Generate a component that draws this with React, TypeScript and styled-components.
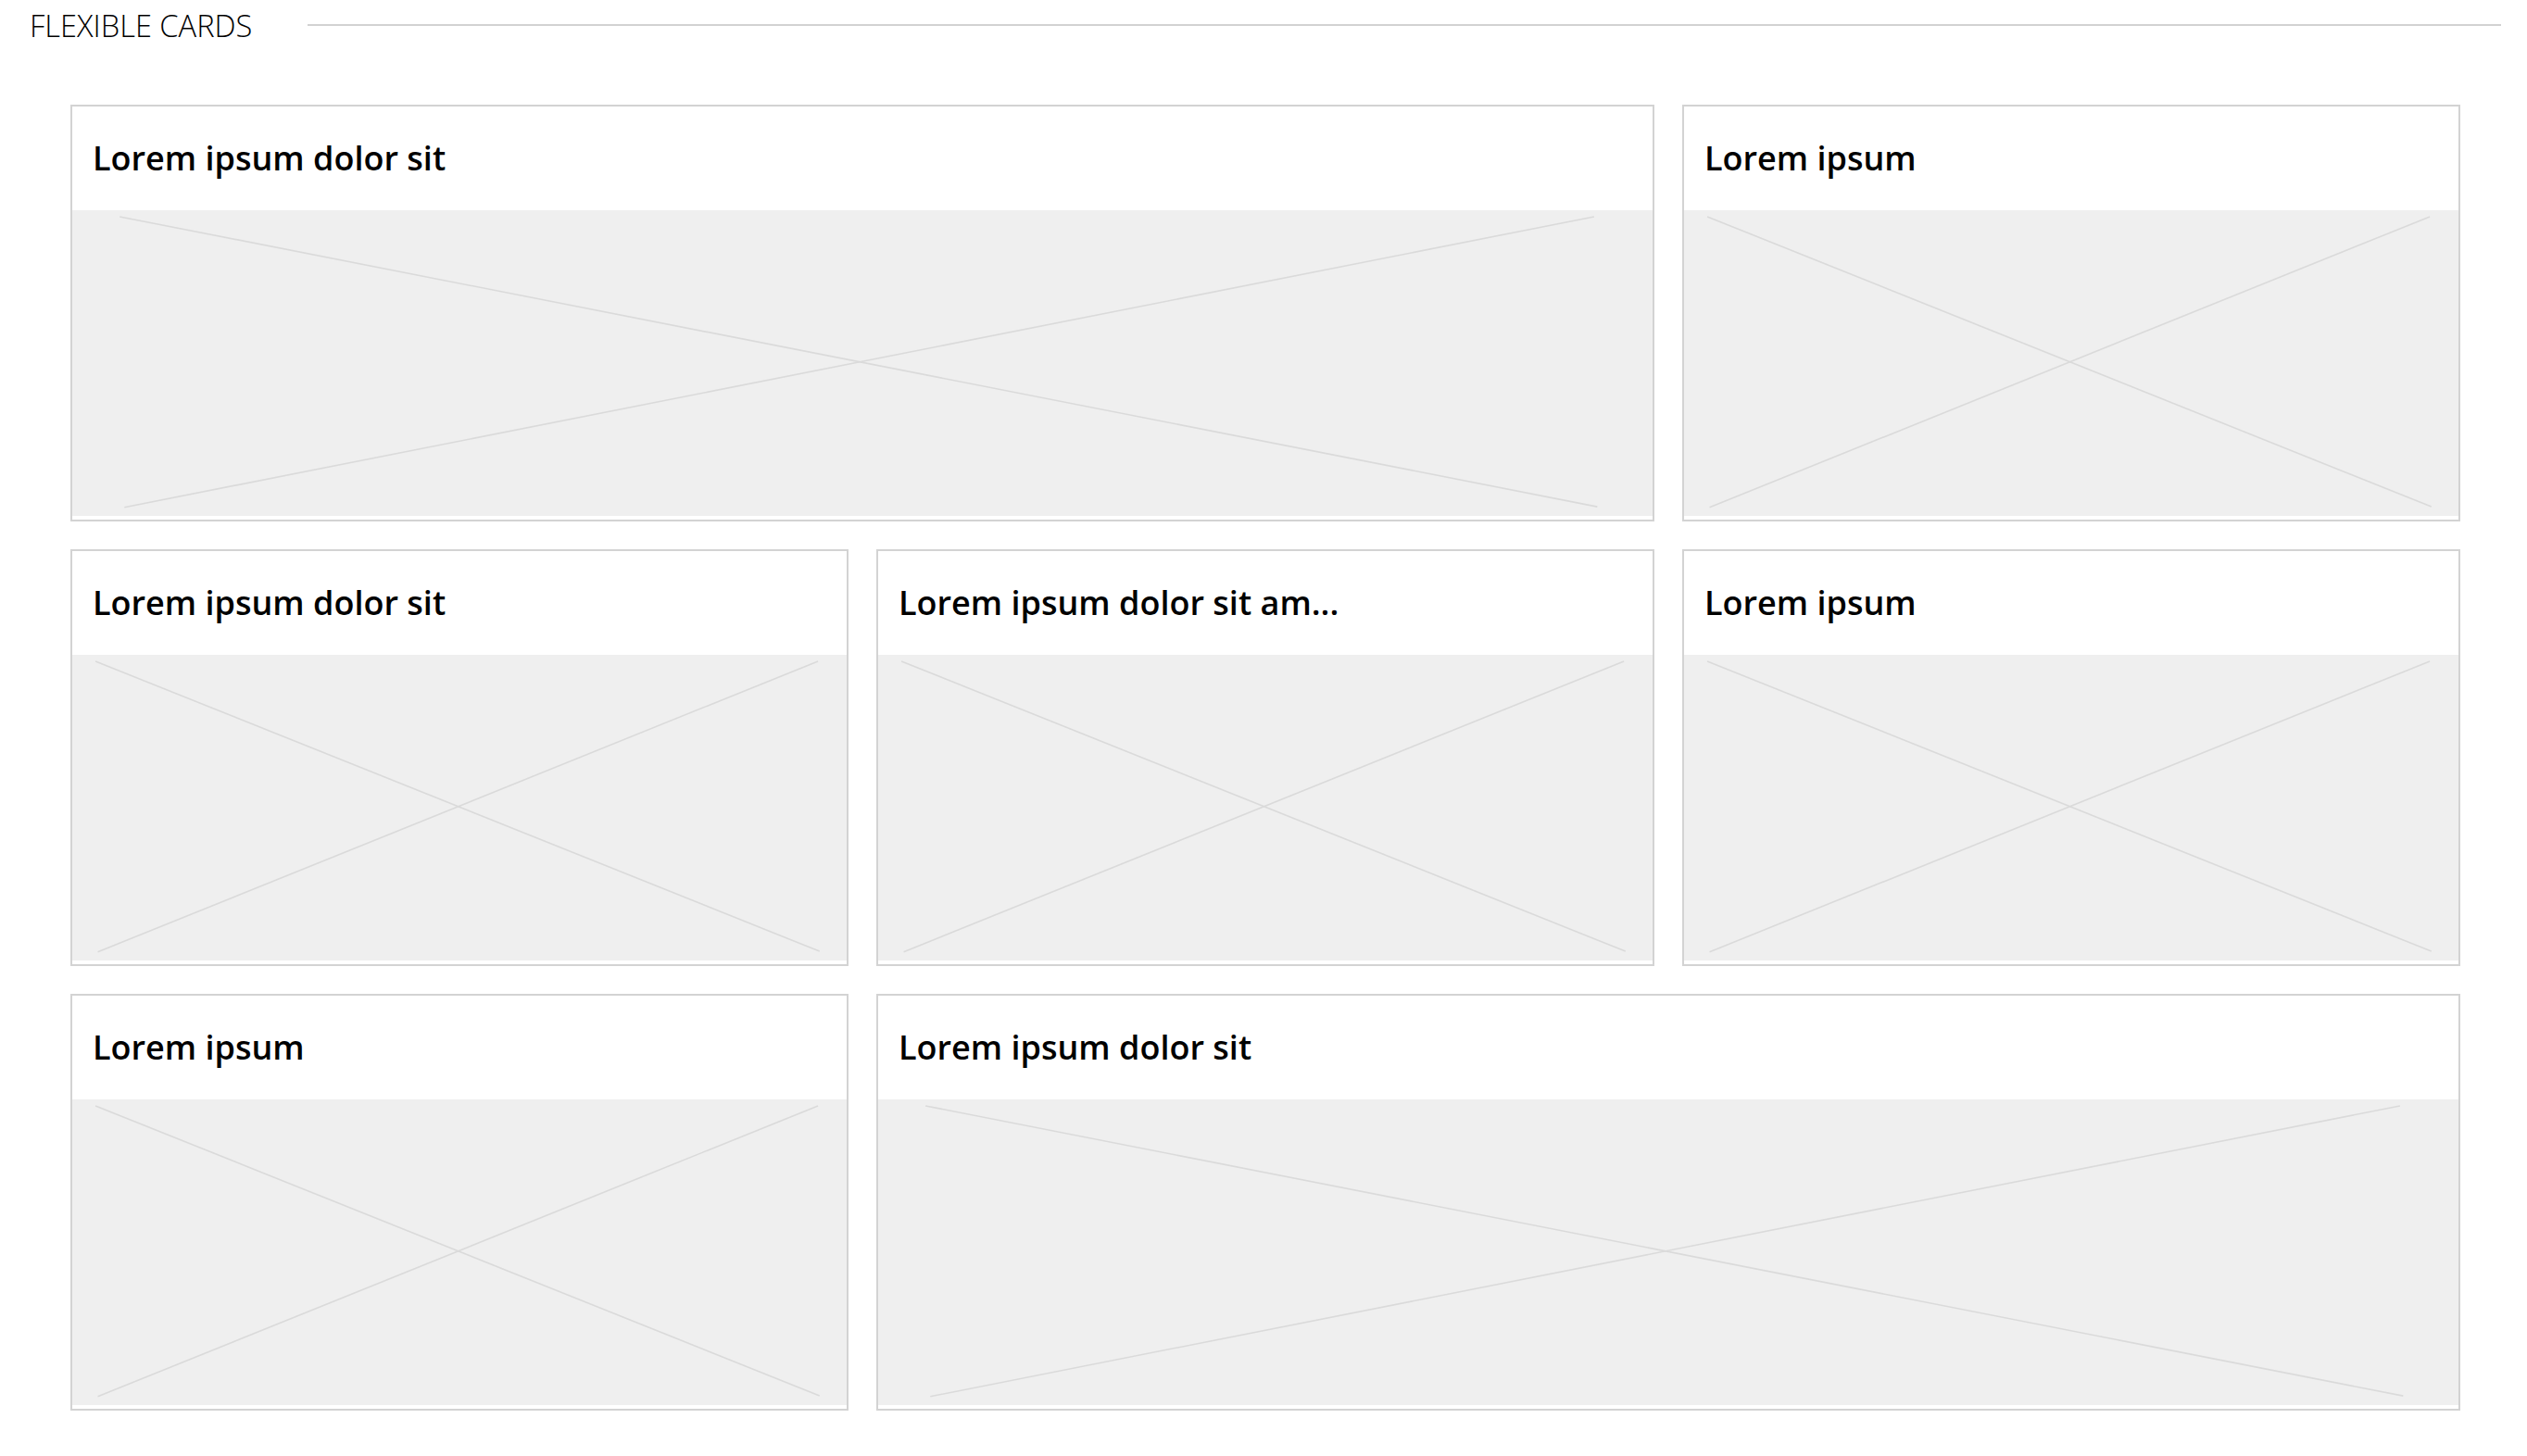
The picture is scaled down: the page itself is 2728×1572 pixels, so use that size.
import React from "react";
import styled, { createGlobalStyle } from "styled-components";

const GlobalStyle = createGlobalStyle`
  html, body {
    margin: 0;
    padding: 0;
    background: #ffffff;
  }
  body {
    font-family: "Open Sans", "Liberation Sans", sans-serif;
  }
`;

const Page = styled.div`
  width: 2728px;
  min-height: 1572px;
  box-sizing: border-box;
  padding-top: 5px;
`;

const SectionHeader = styled.div`
  display: flex;
  align-items: center;
  gap: 60px;
  padding: 0 28px 0 32px;
`;

const SectionTitle = styled.h2`
  margin: 0;
  font-family: "Open Sans", "Liberation Sans", sans-serif;
  font-weight: 300;
  font-size: 32.6px;
  line-height: normal;
  color: #000000;
  white-space: nowrap;
`;

const Rule = styled.div`
  flex: 1;
  height: 2px;
  margin-bottom: 1px;
  background: #d2d2d2;
`;

const Grid = styled.div`
  display: grid;
  grid-template-columns: repeat(3, 1fr);
  grid-auto-rows: 450px;
  gap: 30px;
  padding: 0 72px 0 76px;
  margin-top: 63px;
`;

const Card = styled.div<{ $span: number }>`
  grid-column: span ${(p) => p.$span};
  display: flex;
  flex-direction: column;
  border: 2px solid #d3d3d3;
  background: #ffffff;
  box-sizing: border-box;
  min-width: 0;
  min-height: 0;
  overflow: hidden;
`;

const CardHeader = styled.div`
  height: 112px;
  flex: none;
  box-sizing: border-box;
  display: flex;
  align-items: center;
  padding: 0 22px 2px;
`;

const CardTitle = styled.h3`
  margin: 0;
  font-family: "Open Sans", "Liberation Sans", sans-serif;
  font-weight: 600;
  font-size: 36px;
  color: #000000;
  white-space: nowrap;
  overflow: hidden;
  text-overflow: ellipsis;
`;

const Placeholder = styled.div`
  flex: 1 1 0;
  min-height: 0;
  margin-bottom: 4px;
  background: #efefef;
  position: relative;
`;

const PlaceholderSvg = styled.svg`
  position: absolute;
  inset: 0;
  width: 100%;
  height: 100%;
  display: block;
`;

const PlaceholderImage = () => (
  <Placeholder>
    <PlaceholderSvg viewBox="0 0 100 100" preserveAspectRatio="none">
      <line
        x1="3"
        y1="2.1"
        x2="96.5"
        y2="97"
        stroke="#dadada"
        strokeWidth="1.6"
        vectorEffect="non-scaling-stroke"
      />
      <line
        x1="96.3"
        y1="2.1"
        x2="3.3"
        y2="97.2"
        stroke="#dadada"
        strokeWidth="1.6"
        vectorEffect="non-scaling-stroke"
      />
    </PlaceholderSvg>
  </Placeholder>
);

const cards: { title: string; span: number }[] = [
  { title: "Lorem ipsum dolor sit", span: 2 },
  { title: "Lorem ipsum", span: 1 },
  { title: "Lorem ipsum dolor sit", span: 1 },
  { title: "Lorem ipsum dolor sit am...", span: 1 },
  { title: "Lorem ipsum", span: 1 },
  { title: "Lorem ipsum", span: 1 },
  { title: "Lorem ipsum dolor sit", span: 2 },
];

export default function App() {
  return (
    <Page>
      <GlobalStyle />
      <SectionHeader>
        <SectionTitle>FLEXIBLE CARDS</SectionTitle>
        <Rule />
      </SectionHeader>
      <Grid>
        {cards.map((c, i) => (
          <Card key={i} $span={c.span}>
            <CardHeader>
              <CardTitle>{c.title}</CardTitle>
            </CardHeader>
            <PlaceholderImage />
          </Card>
        ))}
      </Grid>
    </Page>
  );
}
